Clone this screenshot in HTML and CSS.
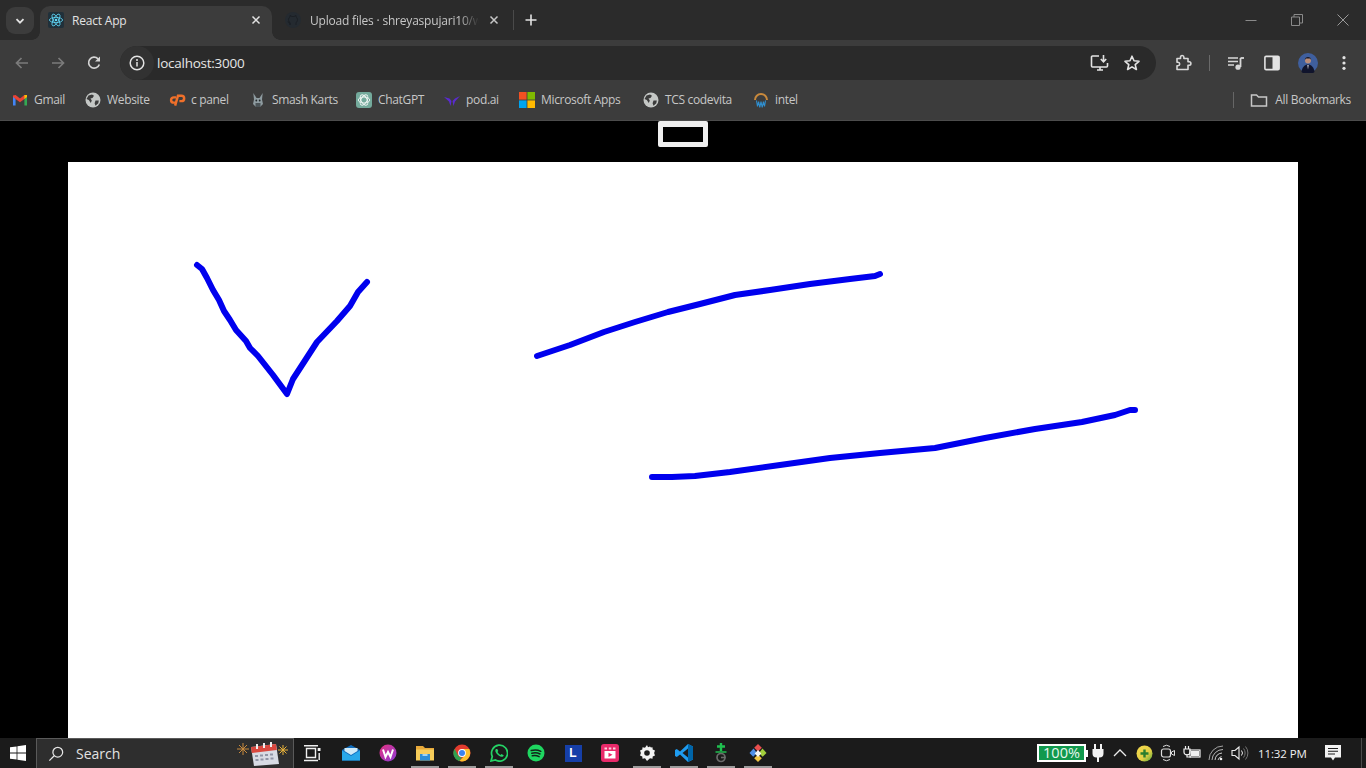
FILE: index.html
```html
<!DOCTYPE html>
<html lang="en">
<head>
<meta charset="utf-8">
<title>React App</title>
<link rel="stylesheet" href="styles.css">
</head>
<body>
<header class="chrome">
  <div class="tabstrip">
    <button class="expander"><svg width="12" height="12" viewBox="0 0 12 12"><path d="M2.5 4.2 6 7.7l3.5-3.5" fill="none" stroke="#e3e3e3" stroke-width="1.8"/></svg></button>
    <div class="tab active">
      <svg class="fav" viewBox="0 0 16 16"><rect width="16" height="16" rx="2" fill="#20303a"/><g fill="none" stroke="#61dafb" stroke-width=".8"><ellipse cx="8" cy="8" rx="6.6" ry="2.6"/><ellipse cx="8" cy="8" rx="6.6" ry="2.6" transform="rotate(60 8 8)"/><ellipse cx="8" cy="8" rx="6.6" ry="2.6" transform="rotate(120 8 8)"/></g><circle cx="8" cy="8" r="1.3" fill="#61dafb"/></svg>
      <span class="tab-title">React App</span>
      <svg class="tab-x" viewBox="0 0 10 10"><path d="M1.5 1.5l7 7m0-7l-7 7" stroke="#e3e3e3" stroke-width="1.5"/></svg>
    </div>
    <div class="tab other">
      <svg class="fav" viewBox="0 0 16 16"><circle cx="8" cy="8" r="8" fill="#242a30"/><path d="M5 13V11C3 11 3 9.500 3 9.500 M11 13V10.500C13 9.500 13 6 11 5V3.500L9 4.500H7L5 3.500V5C3 6 3 9.500 5 10.500V13" fill="none" stroke="#1b1f24" stroke-width="1"/></svg>
      <span class="tab-title fade">Upload files · shreyaspujari10/w</span>
      <svg class="tab-x" viewBox="0 0 10 10"><path d="M1.500 1.500l7 7m0-7l-7 7" stroke="#c7c7c7" stroke-width="1.500"/></svg>
    </div>
    <span class="tab-sep"></span>
    <button class="newtab"><svg width="12" height="12" viewBox="0 0 12 12"><path d="M6 .5v11M.5 6h11" stroke="#e3e3e3" stroke-width="1.600"/></svg></button>
    <div class="winctl">
      <span class="wbtn"><svg width="12" height="12" viewBox="0 0 12 12"><path d="M.5 6.500h11" stroke="#8a8a8a"/></svg></span>
      <span class="wbtn"><svg width="12" height="12" viewBox="0 0 12 12"><path d="M.5 3h8v8.500h-8zM3 3V.5h8.500V9H8.500" fill="none" stroke="#8a8a8a"/></svg></span>
      <span class="wbtn"><svg width="12" height="12" viewBox="0 0 12 12"><path d="M.5.500l11 11m0-11l-11 11" stroke="#9a9a9a"/></svg></span>
    </div>
  </div>

  <div class="toolbar">
    <span class="tbtn"><svg width="16" height="16" viewBox="0 0 16 16"><path d="M14 8H3M7.500 3 2.500 8l5 5" fill="none" stroke="#7b7b7b" stroke-width="1.700"/></svg></span>
    <span class="tbtn"><svg width="16" height="16" viewBox="0 0 16 16"><path d="M2 8h11M8.500 3l5 5-5 5" fill="none" stroke="#7b7b7b" stroke-width="1.700"/></svg></span>
    <span class="tbtn"><svg width="16" height="16" viewBox="0 0 16 16"><path d="M13.300 9.500A5.500 5.500 0 1 1 12 3.800" fill="none" stroke="#d5d5d5" stroke-width="1.700"/><path d="M14 1.500V6.500H9z" fill="#d5d5d5"/></svg></span>
    <div class="omnibox">
      <span class="site-info"><svg width="16" height="16" viewBox="0 0 16 16"><circle cx="8" cy="8" r="6.800" fill="none" stroke="#e3e3e3" stroke-width="1.500"/><path d="M8 7v4.500" stroke="#e3e3e3" stroke-width="1.500"/><circle cx="8" cy="4.900" r="1" fill="#e3e3e3"/></svg></span>
      <span class="url">localhost:3000</span>
      <span class="obtn omni-first"><svg width="20" height="18" viewBox="0 0 20 18"><path d="M9 2H2.500A1 1 0 0 0 1.500 3v9a1 1 0 0 0 1 1h14a1 1 0 0 0 1-1V9" fill="none" stroke="#e3e3e3" stroke-width="1.600"/><path d="M7 16h6M10 13v3" stroke="#e3e3e3" stroke-width="1.600"/><path d="M13.500 1v6.500M10.800 5l2.700 2.800L16.200 5" fill="none" stroke="#e3e3e3" stroke-width="1.600"/></svg></span>
      <span class="obtn"><svg width="18" height="18" viewBox="0 0 18 18"><path d="M9 2.200l2 4.600 5 .5-3.800 3.300 1.200 4.900L9 12.900l-4.400 2.600 1.200-4.900L2 7.300l5-.5z" fill="none" stroke="#e3e3e3" stroke-width="1.600" stroke-linejoin="round"/></svg></span>
    </div>
    <span class="tbtn ext"><svg width="18" height="18" viewBox="0 0 18 18"><path d="M3 4.500h3.500V3.200a1.700 1.700 0 0 1 3.400 0v1.300H14v3.300h1.200a1.700 1.700 0 0 1 0 3.400H14v4.300H3v-3.800h1a1.700 1.700 0 0 0 0-3.400H3z" fill="none" stroke="#d8d8d8" stroke-width="1.600" stroke-linejoin="round"/></svg></span>
    <span class="tb-sep"></span>
    <span class="tbtn"><svg width="18" height="16" viewBox="0 0 18 16"><path d="M1 3h10M1 6.500h10M1 10h6" stroke="#d8d8d8" stroke-width="1.500"/><path d="M13.500 3v9" stroke="#d8d8d8" stroke-width="1.800"/><path d="M13.500 3H17" stroke="#d8d8d8" stroke-width="1.800"/><circle cx="11" cy="12.200" r="2.600" fill="#d8d8d8"/></svg></span>
    <span class="tbtn"><svg width="16" height="16" viewBox="0 0 16 16"><rect x=".9" y="1.400" width="14.200" height="13.200" rx="1.200" fill="none" stroke="#e3e3e3" stroke-width="1.600"/><rect x="8.500" y="1.400" width="6.600" height="13.200" fill="#e3e3e3"/></svg></span>
    <span class="tbtn"><svg width="20" height="20" viewBox="0 0 20 20"><circle cx="10" cy="10" r="10" fill="#3f5f9e"/><path d="M3.500 19c.5-5 3.500-7.500 6.500-7.500s6 2.500 6.500 7.500a10 10 0 0 1-13 0z" fill="#10142c"/><circle cx="10" cy="7.500" r="3" fill="#b98d7a"/><path d="M6.800 7c0-4 6.400-4 6.400 0l-1-1.500H8z" fill="#121526"/><path d="M9.300 12h1.400l-.7 4.500z" fill="#d7d7e6"/></svg></span>
    <span class="tbtn"><svg width="16" height="16" viewBox="0 0 16 16"><circle cx="8" cy="2.700" r="1.600" fill="#e3e3e3"/><circle cx="8" cy="8" r="1.600" fill="#e3e3e3"/><circle cx="8" cy="13.300" r="1.600" fill="#e3e3e3"/></svg></span>
  </div>

  <nav class="bookmarks">
    <a class="bm bm-gmail"><svg class="bi" viewBox="0 0 16 16"><path d="M1 4v9.500h2.600V7z" fill="#4285f4"/><path d="M15 4v9.500h-2.600V7z" fill="#34a853"/><path d="M1 3.500 3.600 3 8 6.600 12.400 3 15 3.500V5l-2.600 2L8 10.300 3.600 7 1 5z" fill="#ea4335"/><path d="M12.400 3 15 3v2l-2.600 2z" fill="#fbbc04"/></svg><span>Gmail</span></a>
    <a class="bm bm-web"><svg class="bi" viewBox="0 0 16 16"><circle cx="8" cy="8" r="7.500" fill="#c4c7c5"/><path d="M3.500 3.500 7 2.500 9 3.800 7.500 6 5.500 6.500 6.800 8.500 5.800 11 3.800 8 1.500 7zM10.500 8.500h3.300l-.5 2.800-2.800 2.500-.9-2.600z" fill="#3c3c3c"/></svg><span>Website</span></a>
    <a class="bm bm-cp"><svg class="bi wide" viewBox="0 0 18 16"><path d="M7.500 5.200H5A2.800 2.800 0 0 0 5 10.800H6.500" fill="none" stroke="#f0702a" stroke-width="2.600"/><path d="M6.500 14 9.500 3.500h3.700a2.800 2.800 0 0 1 0 5.700H11" fill="none" stroke="#f0702a" stroke-width="2.600"/></svg><span>c panel</span></a>
    <a class="bm bm-smash"><svg class="bi" viewBox="0 0 16 16"><path d="M3.300 1 6.500 6h3l3.200-5-.7 6.500L13 12l-3 3H6L3 12l1-4.500z" fill="#8e9ba0"/><path d="M5.500 11h5v4h-5z" fill="#4b5357"/><circle cx="6.300" cy="8.500" r=".9" fill="#22282a"/><circle cx="9.700" cy="8.500" r=".9" fill="#22282a"/></svg><span>Smash Karts</span></a>
    <a class="bm bm-gpt"><svg class="bi" viewBox="0 0 16 16"><rect width="16" height="16" rx="3" fill="#74aa9c"/><g fill="none" stroke="#f2f7f5" stroke-width=".9"><ellipse cx="8" cy="8" rx="5.700" ry="3"/><ellipse cx="8" cy="8" rx="5.700" ry="3" transform="rotate(60 8 8)"/><ellipse cx="8" cy="8" rx="5.700" ry="3" transform="rotate(120 8 8)"/></g></svg><span>ChatGPT</span></a>
    <a class="bm bm-pod"><svg class="bi" viewBox="0 0 16 16"><path d="M0 5l5.500 1.500L7.500 9 6.500 14 5 9.500zM16 4l-5 2.500L8.500 9l1 5 1.500-4.500z" fill="#5a2bd0"/></svg><span>pod.ai</span></a>
    <a class="bm bm-ms"><svg class="bi" viewBox="0 0 16 16"><rect width="7.600" height="7.600" fill="#f25022"/><rect x="8.400" width="7.600" height="7.600" fill="#7fba00"/><rect y="8.400" width="7.600" height="7.600" fill="#00a4ef"/><rect x="8.400" y="8.400" width="7.600" height="7.600" fill="#ffb900"/></svg><span>Microsoft Apps</span></a>
    <a class="bm bm-tcs"><svg class="bi" viewBox="0 0 16 16"><circle cx="8" cy="8" r="7.500" fill="#c4c7c5"/><path d="M3.500 3.500 7 2.500 9 3.800 7.500 6 5.500 6.500 6.800 8.500 5.800 11 3.800 8 1.500 7zM10.500 8.500h3.300l-.5 2.800-2.800 2.500-.9-2.600z" fill="#3c3c3c"/></svg><span>TCS codevita</span></a>
    <a class="bm bm-intel"><svg class="bi" viewBox="0 0 16 16"><path d="M2 8a6 6 0 0 1 12 0" fill="none" stroke="#c8893c" stroke-width="2"/><path d="M3.500 8.500l1 6 1.100-5 1.200 6 1.200-6 1.200 6 1.200-6 1.100 5 1-6" fill="none" stroke="#2f8fd0" stroke-width="1.100"/></svg><span>intel</span></a>
    <span class="bm-right">
      <span class="bm-sep"></span>
      <svg class="folder" width="18" height="16" viewBox="0 0 18 16"><path d="M1.500 3h5l2 2h8v9h-15z" fill="none" stroke="#c7c7c7" stroke-width="1.500"/></svg>
      <span>All Bookmarks</span>
    </span>
  </nav>
</header>

<main class="page">
  <button class="tool"></button>
  <div class="board">
    <svg class="ink" viewBox="68 162 1230 576" preserveAspectRatio="xMinYMin slice">
      <polyline points="197,265 202,269 207,278 213,290 219,300 224,311 230,320 236,330 246,341 250,348 258,356 273,375 287,394 293,379 317,342 337,321 350,306 358,292 367,282"/>
      <polyline points="537,356 570,345 604,332 635,322 668,312 700,304 735,295 770,290 810,284 850,279 875,276 880,274"/>
      <polyline points="652,477 672,477 695,476 730,472 780,465 830,458 880,453 935,448 985,438 1035,429 1082,422 1115,415 1130,410 1135,410"/>
    </svg>
  </div>
</main>

<footer class="taskbar">
  <span class="start"><svg width="16" height="16" viewBox="0 0 16 16"><path d="M0 2.300 6.600 1.400V7.600H0zM7.400 1.300 16 0V7.600H7.400zM0 8.400H6.600V14.600L0 13.700zM7.400 8.400H16V16L7.400 14.700z" fill="#fff"/></svg></span>
  <div class="search">
    <svg width="16" height="16" viewBox="0 0 18 18"><circle cx="11" cy="7" r="5.500" fill="none" stroke="#e6e6e6" stroke-width="1.400"/><path d="M7 11 1.500 16.500" stroke="#e6e6e6" stroke-width="1.400"/></svg>
    <span class="search-label">Search</span>
    <svg class="doodle" width="54" height="26" viewBox="0 0 54 26"><g stroke="#c98a3c" stroke-width="1"><path d="M1 8h12M7 2v12M3 4l8 8M11 4l-8 8"/></g><g stroke="#e8b23a" stroke-width="1"><path d="M42 9h10M47 4v10M43.500 5.500l7 7M50.500 5.500l-7 7"/></g><path d="M15 6 40 3l3 20-25 2z" fill="#d8dbe4"/><path d="M15 6 40 3l.8 6L15.800 12z" fill="#d9483f"/><g fill="#8f94a6"><rect x="19" y="14" width="3" height="2"/><rect x="24" y="13.500" width="3" height="2"/><rect x="29" y="13" width="3" height="2"/><rect x="34" y="12.500" width="3" height="2"/><rect x="19.500" y="18" width="3" height="2"/><rect x="24.500" y="17.500" width="3" height="2"/><rect x="29.500" y="17" width="3" height="2"/><rect x="34.500" y="16.500" width="3" height="2"/></g><g fill="#eee"><rect x="20" y="3" width="2" height="5"/><rect x="27" y="2" width="2" height="5"/><rect x="34" y="1" width="2" height="5"/></g></svg>
  </div>
  <div class="apps">
    <span class="app first"><svg width="18" height="17" viewBox="0 0 18 17"><path d="M3.500 3.500h9v9h-9zM1 .8h14M1 15.500h14" fill="none" stroke="#f0f0f0" stroke-width="1.400"/><rect x="14.700" y="3" width="2.800" height="3" fill="#f0f0f0"/><rect x="15.500" y="8" width="1.400" height="7" fill="#f0f0f0"/></svg></span>
    <span class="app"><svg width="18" height="16" viewBox="0 0 18 16"><path d="M0 5 9 0l9 5v10.500H0z" fill="#0f6cbd"/><path d="M0 5.500 9 11l9-5.500V15.500H0z" fill="#28a8ea"/><path d="M2.500 6V3h13v3L9 10z" fill="#cfeaf8"/></svg></span>
    <span class="app"><svg width="18" height="18" viewBox="0 0 18 18"><defs><linearGradient id="wps" x1="0" y1="0" x2="1" y2="1"><stop offset="0" stop-color="#e2327f"/><stop offset="1" stop-color="#8e3bd8"/></linearGradient></defs><circle cx="9" cy="9" r="8.500" fill="url(#wps)"/><path d="M4 5.500 6.500 13 9 8l2.500 5L14 5.500" fill="none" stroke="#fff" stroke-width="2"/></svg></span>
    <span class="app run"><svg width="18" height="16" viewBox="0 0 18 16"><path d="M0 1h7l2 2h9v3H0z" fill="#e8a93a"/><path d="M0 4.500h18v11H0z" fill="#f6cd5a"/><path d="M4 9h10v6.500H4z" fill="#2c8ed6"/><path d="M6.500 9h5v2h-5z" fill="#9fd4f3"/></svg></span>
    <span class="app run"><svg width="18" height="18" viewBox="0 0 18 18"><circle cx="9" cy="9" r="8.500" fill="#e33b2e"/><path d="M1.600 4.800 5 11.500A4.500 4.500 0 0 0 9 13.500L6 17.200A8.500 8.500 0 0 1 1.600 4.800z" fill="#2fa24f"/><path d="M9 5h7.200a8.500 8.500 0 0 1-9.700 12.100L10.500 12.800 13 9z" fill="#fbc02d"/><circle cx="9" cy="9" r="3.900" fill="#fff"/><circle cx="9" cy="9" r="3" fill="#3b82f0"/></svg></span>
    <span class="app run"><svg width="18" height="18" viewBox="0 0 18 18"><path d="M1 17l1.300-4.400A8 8 0 1 1 5.400 16z" fill="none" stroke="#25d366" stroke-width="1.700"/><path d="M6 5c-1 1-1 2.500.5 4.500S10 12.500 11.500 12.800c1 .2 2-.5 2.200-1.600L11.500 10l-1 1C9.500 10.500 8 9 7.500 8l.8-1L7.300 5z" fill="#25d366"/></svg></span>
    <span class="app"><svg width="18" height="18" viewBox="0 0 18 18"><circle cx="9" cy="9" r="8.500" fill="#1ed760"/><path d="M4.200 6.500c3.500-1 6.800-.7 9.600.8M4.800 9.200c3-.8 5.800-.5 8.200.8M5.300 11.800c2.500-.6 4.700-.3 6.800.8" fill="none" stroke="#12231a" stroke-width="1.500" stroke-linecap="round"/></svg></span>
    <span class="app"><span class="l-app">L</span></span>
    <span class="app"><svg width="18" height="18" viewBox="0 0 18 18"><rect width="18" height="18" rx="3" fill="#e92a6a"/><path d="M3.500 7h11v7.500h-11z" fill="#fff"/><path d="M3.500 3.500h2.500v2h-2.500zM7.800 3.500h2.500v2h-2.500zM12 3.500h2.500v2H12z" fill="#fbd3df"/><path d="M7.500 8.700 11.500 10.800l-4 2.100z" fill="#e92a6a"/></svg></span>
    <span class="app run"><svg width="16" height="16" viewBox="0 0 16 16"><path d="M8 0l1 2.300 2-.8.900 1 1.600-.3.200 2.200 2.300 1-.9 2.600.9 2.600-2.300 1-.2 2.200-2.500-.5L8 16l-2-2.700-2.500.5-.2-2.200L1 10.600 1.900 8 1 5.400l2.300-1 .2-2.200 2.500.5z" fill="#f2f2f2"/><circle cx="8" cy="8" r="2.800" fill="#1c1c1c"/></svg></span>
    <span class="app run"><svg width="18" height="18" viewBox="0 0 18 18"><path d="M13 0l5 2.400v13.200L13 18 5 10.500 1.800 13 0 12V6l1.800-1L5 7.500z" fill="#1f9cf0"/><path d="M13 4.500v9L7.500 9z" fill="#1c1c1c"/><path d="M13 0l5 2.400v13.200L13 18z" fill="#0065a9"/></svg></span>
    <span class="app run"><svg width="18" height="20" viewBox="0 0 18 20"><path d="M9 0v8M5 3.500h8" stroke="#1fbf4f" stroke-width="2.400"/><path d="M3.500 9h11" stroke="#1fbf4f" stroke-width="1.500"/><circle cx="9" cy="14.500" r="4" fill="none" stroke="#6b6b6b" stroke-width="1.700"/><path d="M9 14.500h4.500" stroke="#6b6b6b" stroke-width="1.600"/></svg></span>
    <span class="app run"><svg width="20" height="20" viewBox="0 0 20 20"><path d="M10 1l3.800 3.800L10 8.600 6.200 4.800z" fill="#e94f4f"/><path d="M14.500 5.500 18.500 10l-3.800 3.800L11 10z" fill="#a3cf3c"/><path d="M5.500 5.500 9 10l-3.800 3.800L1.500 10z" fill="#4f8fe6"/><path d="M10 11.400l3.800 3.800L10 19l-3.800-3.800z" fill="#f2c744"/><path d="M6.700 10.500 10 7l3.300 3.500L10 14z" fill="#f4f4f4"/></svg></span>
  </div>
  <div class="tray">
    <span class="battery"><span class="batt-body">100%</span><span class="batt-nub"></span></span>
    <span class="tr plug"><svg width="12" height="18" viewBox="0 0 12 18"><path d="M3 0v5M9 0v5" stroke="#f2f2f2" stroke-width="2"/><path d="M.5 5h11v4.500a4 4 0 0 1-4 4H7V18H5v-4.500h-.5a4 4 0 0 1-4-4z" fill="#f2f2f2"/></svg></span>
    <span class="tr"><svg width="14" height="10" viewBox="0 0 14 10"><path d="M1 8l6-6 6 6" fill="none" stroke="#ececec" stroke-width="1.300"/></svg></span>
    <span class="tr"><svg width="17" height="17" viewBox="0 0 17 17"><defs><linearGradient id="cir" x1="0" y1="0" x2="1" y2="1"><stop offset="0" stop-color="#f6da4e"/><stop offset=".6" stop-color="#e3cf45"/><stop offset="1" stop-color="#4fa83a"/></linearGradient></defs><circle cx="8.500" cy="8.500" r="8" fill="url(#cir)"/><path d="M8.500 4.500v8M4.500 8.500h8" stroke="#2a7d2e" stroke-width="2.400"/></svg></span>
    <span class="tr"><svg width="16" height="18" viewBox="0 0 16 18"><path d="M3 2.500a6 6 0 0 1 7 0M3 15.500a6 6 0 0 0 7 0" fill="none" stroke="#dedede" stroke-width="1"/><rect x="1.500" y="5" width="9" height="8" rx="2" fill="none" stroke="#dedede" stroke-width="1.200"/><path d="M11.500 8l3-1.500v5l-3-1.500z" fill="none" stroke="#dedede"/></svg></span>
    <span class="tr"><svg width="18" height="14" viewBox="0 0 18 14"><path d="M2.500 0v3M5.500 0v3" stroke="#f0f0f0" stroke-width="1.200"/><path d="M1 3h6v3a3 3 0 0 1-6 0zM4 8v3h4" fill="none" stroke="#f0f0f0" stroke-width="1.200"/><rect x="7" y="4" width="10" height="7" fill="none" stroke="#f0f0f0" stroke-width="1.200"/><rect x="8" y="5" width="8" height="5" fill="#f0f0f0"/></svg></span>
    <span class="tr"><svg width="16" height="16" viewBox="0 0 16 16"><g fill="none" stroke="#cfcfcf"><path d="M1 15A14 14 0 0 1 15 1" stroke-opacity=".75"/><path d="M4 15A11 11 0 0 1 15 4.500" stroke-opacity=".85"/><path d="M7 15A8 8 0 0 1 14 8"/><path d="M10 15A5 5 0 0 1 13.500 11.500"/></g><circle cx="13" cy="14" r="1.300" fill="#f0f0f0"/></svg></span>
    <span class="tr"><svg width="18" height="16" viewBox="0 0 18 16"><path d="M1 5.500h3L8 2v12L4 10.500H1z" fill="none" stroke="#ededed" stroke-width="1.100"/><path d="M10.500 5.500a4 4 0 0 1 0 5" fill="none" stroke="#ededed"/><path d="M12.500 3.500a7 7 0 0 1 0 9M14.500 1.500a10 10 0 0 1 0 13" fill="none" stroke="#777"/></svg></span>
    <span class="clock">11:32 PM</span>
    <span class="notif"><svg width="16" height="16" viewBox="0 0 16 16"><path d="M0 0h16v12.500H10L8 15.500 6 12.500H0z" fill="#f2f2f2"/><path d="M3 3.500h10M3 6.300h10M3 9h7" stroke="#1c1c1c" stroke-width="1.100"/></svg></span>
    <span class="desk-edge"></span>
  </div>
</footer>
</body>
</html>
```

FILE: styles.css
```css
* { box-sizing: border-box; }
html, body { height: 100%; }
body {
  margin: 0;
  height: 768px;
  overflow: hidden;
  display: flex;
  flex-direction: column;
  background: #000;
  font-family: "Open Sans", "Noto Sans", sans-serif;
  font-size: 12px;
  color: #c7c7c7;
}
button { padding: 0; font: inherit; }
svg { display: block; flex: none; }

/* browser chrome */
.chrome { flex: none; height: 121px; display: flex; flex-direction: column; background: #3c3c3c; }

.tabstrip { height: 40px; display: flex; align-items: flex-end; background: #2b2b2b; padding-left: 6px; }
.expander {
  width: 28px; height: 27px; margin: 0 6px 6px 0; border: 0; border-radius: 9px;
  background: #3c3c3c; display: flex; align-items: center; justify-content: center;
}
.tab { height: 34px; padding-bottom: 6px; display: flex; align-items: center; position: relative; }
.tab.active { width: 232px; padding-left: 8px; padding-right: 11px; background: #3c3c3c; border-radius: 10px 10px 0 0; color: #e3e3e3; }
.tab.active::before, .tab.active::after {
  content: ""; position: absolute; bottom: 0; width: 8px; height: 8px;
}
.tab.active::before { left: -8px; background: radial-gradient(circle at 0 0, #2b2b2b 7.5px, #3c3c3c 8px); }
.tab.active::after { right: -8px; background: radial-gradient(circle at 100% 0, #2b2b2b 7.5px, #3c3c3c 8px); }
.tab.other { width: 241px; padding-left: 13px; padding-right: 14px; }
.fav { width: 16px; height: 16px; margin-right: 8px; }
.other .fav { margin-right: 9px; }
.tab-title { flex: 1; min-width: 0; white-space: nowrap; letter-spacing: -.2px; }
.fade { -webkit-mask-image: linear-gradient(90deg, #000 88%, transparent); mask-image: linear-gradient(90deg, #000 88%, transparent); }
.tab-x { width: 10px; height: 10px; margin-left: 10px; }
.tab-sep { width: 1px; height: 20px; margin-bottom: 10px; background: #4a4a4a; }
.newtab { width: 33px; height: 28px; margin-bottom: 6px; border: 0; background: none; display: flex; align-items: center; justify-content: center; }
.winctl { margin-left: auto; align-self: stretch; display: flex; }
.wbtn { width: 46px; display: flex; align-items: center; justify-content: center; }

.toolbar { height: 40px; display: flex; align-items: flex-end; padding: 0 4px; border-top-left-radius: 8px; }
.tbtn { width: 36px; height: 34px; display: flex; align-items: center; justify-content: center; }
.omnibox {
  flex: 1; height: 34px; margin: 0 9px 0 8px; padding: 0 8px 0 0;
  display: flex; align-items: center; background: #2a2a2a; border-radius: 17px;
}
.site-info { width: 34px; height: 34px; border-radius: 50%; background: #323232; display: flex; align-items: center; justify-content: center; }
.url { margin-left: 3px; font-size: 13.5px; letter-spacing: -.25px; color: #e6e6e6; }
.obtn { width: 32px; height: 34px; display: flex; align-items: center; justify-content: center; }
.omni-first { margin-left: auto; }
.tb-sep { width: 1px; height: 16px; margin: 0 8px 9px; background: #6a6a6a; }

.bookmarks { height: 41px; display: flex; align-items: center; padding: 0 15px 1px 12px; border-bottom: 1px solid #4c4c4c; }
.bm { display: flex; align-items: center; gap: 6px; letter-spacing: -.33px; white-space: nowrap; }
.bi { width: 16px; height: 16px; }
.bi.wide { width: 17px; margin-right: -1px; }
.bm-gmail { width: 73px; }
.bm-web { width: 84px; }
.bm-cp { width: 81px; }
.bm-smash { width: 106px; }
.bm-gpt { width: 88px; }
.bm-pod { width: 75px; }
.bm-ms { width: 124px; }
.bm-tcs { width: 110px; }
.bm-right { margin-left: auto; display: flex; align-items: center; letter-spacing: -.33px; white-space: nowrap; }
.bm-sep { width: 1px; height: 16px; margin-right: 16px; background: #666; }
.folder { margin-right: 7px; }

/* page */
.page { flex: 1; min-height: 0; display: flex; flex-direction: column; align-items: center; background: #000; }
.tool { flex: none; width: 50px; height: 26px; border: solid #efefef; border-width: 6px 5px 5px; border-radius: 2px; background: #000; }
.board { flex: 1; width: 1230px; margin-top: 15px; background: #fff; overflow: hidden; }
.ink { width: 1230px; height: 576px; }
.ink polyline { fill: none; stroke: #0000ee; stroke-width: 6; stroke-linecap: round; stroke-linejoin: round; }

/* taskbar */
.taskbar { flex: none; height: 30px; display: flex; align-items: center; background: #1b1b1b; color: #f0f0f0; }
.start { width: 36px; display: flex; justify-content: center; padding-right: 1px; }
.search { width: 258px; height: 30px; display: flex; align-items: center; padding: 0 3px 0 11px; background: #2e2e2e; border: 1px solid #5a5a5a; border-bottom: 0; }
.search-label { margin-left: 12px; font-size: 14px; color: #e2e2e2; }
.doodle { margin-left: auto; }
.apps { display: flex; align-items: stretch; height: 30px; }
.app { width: 37px; display: flex; align-items: center; justify-content: center; }
.app.first { width: 35px; margin-right: 3.5px; }
.run { background: linear-gradient(#9c9c9c, #9c9c9c) center bottom / 28px 2px no-repeat; }
.l-app { width: 17px; height: 17px; background: #163fa8; color: #fff; font: 700 12px "Liberation Sans", sans-serif; display: flex; align-items: center; justify-content: center; }
.tray { margin-left: auto; display: flex; align-items: center; height: 30px; padding-right: 4px; }
.battery { display: flex; align-items: center; width: 51px; }
.batt-body { width: 49px; height: 18px; border: 2px solid #fff; background: #11994d; color: #e8f7ee; font-size: 14.5px; line-height: 14px; text-align: center; }
.batt-nub { width: 2px; height: 7px; background: #fff; }
.tr { width: 24px; display: flex; justify-content: center; }
.tr.plug { width: 20px; }
.clock { width: 66px; padding-left: 6px; font-size: 11.5px; letter-spacing: -.1px; color: #f0f0f0; white-space: nowrap; }
.notif { width: 30px; display: flex; justify-content: center; }
.desk-edge { width: 1px; height: 30px; margin-left: 13px; background: #4a4a4a; }
```
